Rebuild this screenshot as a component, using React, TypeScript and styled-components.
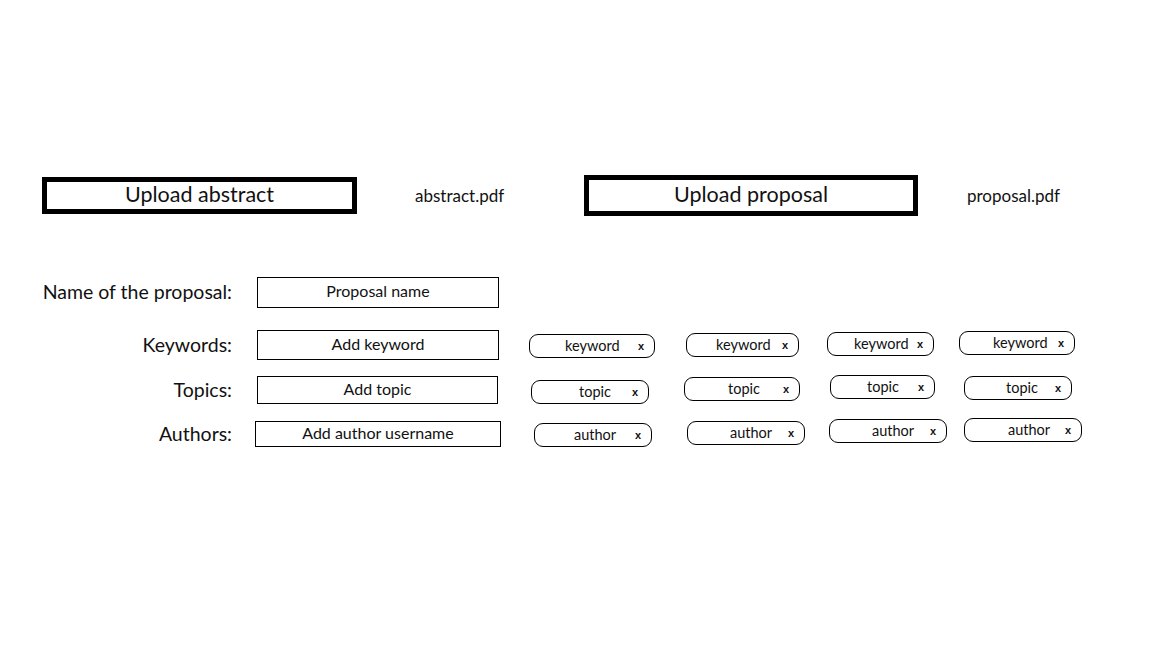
import styled, { createGlobalStyle } from 'styled-components'

const GlobalStyle = createGlobalStyle`
  body {
    margin: 0;
    background: #ffffff;
    font-family: Lato, "Open Sans", sans-serif;
    color: #111111;
  }
`

const Page = styled.div`
  width: 1157px;
  height: 651px;
  padding: 175px 0 0 42px;
  box-sizing: border-box;
`

const UploadRow = styled.div`
  display: flex;
  align-items: center;
  height: 41px;
`

const UploadGroup = styled.div<{ $width?: number; $gap: number }>`
  display: flex;
  align-items: center;
  gap: ${p => p.$gap}px;
  width: ${p => (p.$width ? `${p.$width}px` : 'auto')};
`

const UploadButton = styled.div<{ $width: number; $height: number }>`
  width: ${p => p.$width}px;
  height: ${p => p.$height}px;
  box-sizing: border-box;
  border: 5px solid #000000;
  display: flex;
  align-items: center;
  justify-content: center;
  font-size: 21.5px;
  padding-bottom: 3px;
`

const FileName = styled.span`
  font-size: 17px;
`

const Form = styled.div`
  margin-top: 61px;
  display: flex;
  flex-direction: column;
`

const Row = styled.div<{ $height: number; $gap: number }>`
  display: flex;
  align-items: center;
  height: ${p => p.$height}px;
  margin-bottom: ${p => p.$gap}px;
`

const Label = styled.div`
  width: 190px;
  text-align: right;
  font-size: 19.5px;
  flex-shrink: 0;
  white-space: nowrap;
  padding-bottom: 2px;
`

const Field = styled.div<{ $width: number; $left: number }>`
  margin-left: ${p => p.$left}px;
  width: ${p => p.$width}px;
  height: 100%;
  box-sizing: border-box;
  border: 1px solid #000000;
  display: flex;
  align-items: center;
  justify-content: center;
  font-size: 16px;
  padding-bottom: 4px;
  flex-shrink: 0;
`

const TagList = styled.div`
  display: grid;
  grid-template-columns: 156px 142px 135px auto;
  margin-left: 29px;
  align-items: center;
`

const Tag = styled.div<{ $width: number; $lift: number; $shift: number; $indent: number }>`
  width: ${p => p.$width}px;
  height: 24px;
  margin-left: ${p => p.$shift}px;
  box-sizing: border-box;
  border: 1px solid #000000;
  border-radius: 9px;
  display: flex;
  align-items: center;
  padding: 0 10px 2px ${p => p.$indent}px;
  font-size: 14.5px;
  transform: translateY(${p => -p.$lift}px);
`

const Close = styled.span`
  margin-left: auto;
  font-size: 11px;
  font-weight: 700;
  font-family: "Liberation Sans", Arial, sans-serif;
  padding-top: 2px;
`

const rows = [
  { label: 'Keywords:', field: 'Add keyword', tag: 'keyword', height: 30, gap: 16, fw: 242, fl: 25,
    widths: [126, 113, 107, 116], lifts: [-1, 0, 1, 2], shifts: [1, 2, 1, -2], indents: [35, 29, 26, 33] },
  { label: 'Topics:', field: 'Add topic', tag: 'topic', height: 28, gap: 17, fw: 241, fl: 25,
    widths: [118, 116, 105, 108], lifts: [-2, 1, 3, 2], shifts: [4, 1, 5, 4], indents: [47, 43, 36, 41] },
  { label: 'Authors:', field: 'Add author username', tag: 'author', height: 26, gap: 0, fw: 246, fl: 23,
    widths: [118, 118, 118, 118], lifts: [-1, 1, 3, 4], shifts: [4, 1, 1, 1], indents: [39, 42, 42, 43] },
]

export default function App() {
  return (
    <Page>
      <GlobalStyle />
      <UploadRow>
        <UploadGroup $width={542} $gap={58}>
          <UploadButton $width={315} $height={37}>Upload abstract</UploadButton>
          <FileName>abstract.pdf</FileName>
        </UploadGroup>
        <UploadGroup $gap={49}>
          <UploadButton $width={334} $height={41}>Upload proposal</UploadButton>
          <FileName>proposal.pdf</FileName>
        </UploadGroup>
      </UploadRow>

      <Form>
        <Row $height={31} $gap={22}>
          <Label>Name of the proposal:</Label>
          <Field $width={242} $left={25}>Proposal name</Field>
        </Row>
        {rows.map(r => (
          <Row key={r.label} $height={r.height} $gap={r.gap}>
            <Label>{r.label}</Label>
            <Field $width={r.fw} $left={r.fl}>{r.field}</Field>
            <TagList>
              {r.widths.map((w, i) => (
                <Tag key={i} $width={w} $lift={r.lifts[i]} $shift={r.shifts[i]} $indent={r.indents[i]}>
                  {r.tag}
                  <Close>x</Close>
                </Tag>
              ))}
            </TagList>
          </Row>
        ))}
      </Form>
    </Page>
  )
}
